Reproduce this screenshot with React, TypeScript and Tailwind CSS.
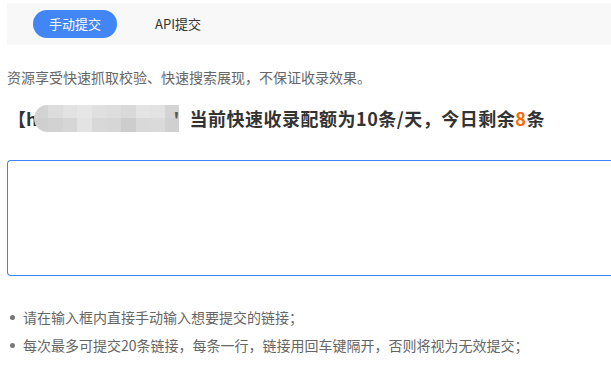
import React from 'react';

const mosaic = [
  ['#d3d3d3', '#cfcfcf'],
  ['#dcdcdc', '#d2d2d2'],
  ['#e2e2e2', '#d6d6d6'],
  ['#e6e6e6', '#e3e3e3'],
  ['#e0e0e0', '#d8d8d8'],
  ['#dddddd', '#d6d6d6'],
  ['#d9d9d9', '#cdcdcd'],
  ['#e4e4e4', '#d9d9d9'],
  ['#e2e2e2', '#dadada'],
  ['#d4d4d4', '#d0d0d0'],
];

const tips = [
  '请在输入框内直接手动输入想要提交的链接；',
  '每次最多可提交20条链接，每条一行，链接用回车键隔开，否则将视为无效提交；',
];

export default function App() {
  return (
    <div
      className="w-full overflow-hidden bg-white pl-[7px] pt-[3px] text-[14px] text-[#666]"
      style={{ fontFamily: '"Microsoft YaHei", "Noto Sans CJK SC", "Noto Sans", sans-serif' }}
    >
      {/* tabs */}
      <div className="flex h-[42px] items-center bg-[#f8f8f8] pl-[26px]">
        <button className="h-[28px] w-[84px] rounded-full bg-[#4285f4] text-[13px] text-white">
          手动提交
        </button>
        <button className="ml-[38px] text-[13px] text-[#333]">API提交</button>
      </div>

      <p className="mt-[22px] leading-[20px]">资源享受快速抓取校验、快速搜索展现，不保证收录效果。</p>

      <div className="mt-[17px] flex h-[28px] items-center text-[18px] font-bold text-[#333]">
        <span className="ml-[1px]">【h</span>
        <div className="ml-[-4px] flex h-[27px] w-[146px] overflow-hidden rounded-l-full rounded-r-[10px]">
          {mosaic.map((c, i) => (
            <div key={i} className="flex flex-1 flex-col">
              <div className="flex-1" style={{ background: c[0] }} />
              <div className="flex-1" style={{ background: c[1] }} />
            </div>
          ))}
        </div>
        <span className="ml-[-6px] w-[10px] text-[#555]">'</span>
        <span className="ml-[6px] tracking-[0.5px]">
          当前快速收录配额为10条/天，今日剩余<span className="text-[#ff6600]">8</span>条
        </span>
      </div>

      <textarea className="mt-[28px] block h-[116px] w-full resize-none rounded-l-[4px] border border-r-0 border-[#3e82f7] outline-none" />

      <ul className="mt-[27px]">
        {tips.map(t => (
          <li key={t} className="flex h-[28px] items-center">
            <span className="ml-[3px] h-[5px] w-[5px] rounded-full bg-[#777]" />
            <span className="ml-[8px]">{t}</span>
          </li>
        ))}
      </ul>
    </div>
  );
}
